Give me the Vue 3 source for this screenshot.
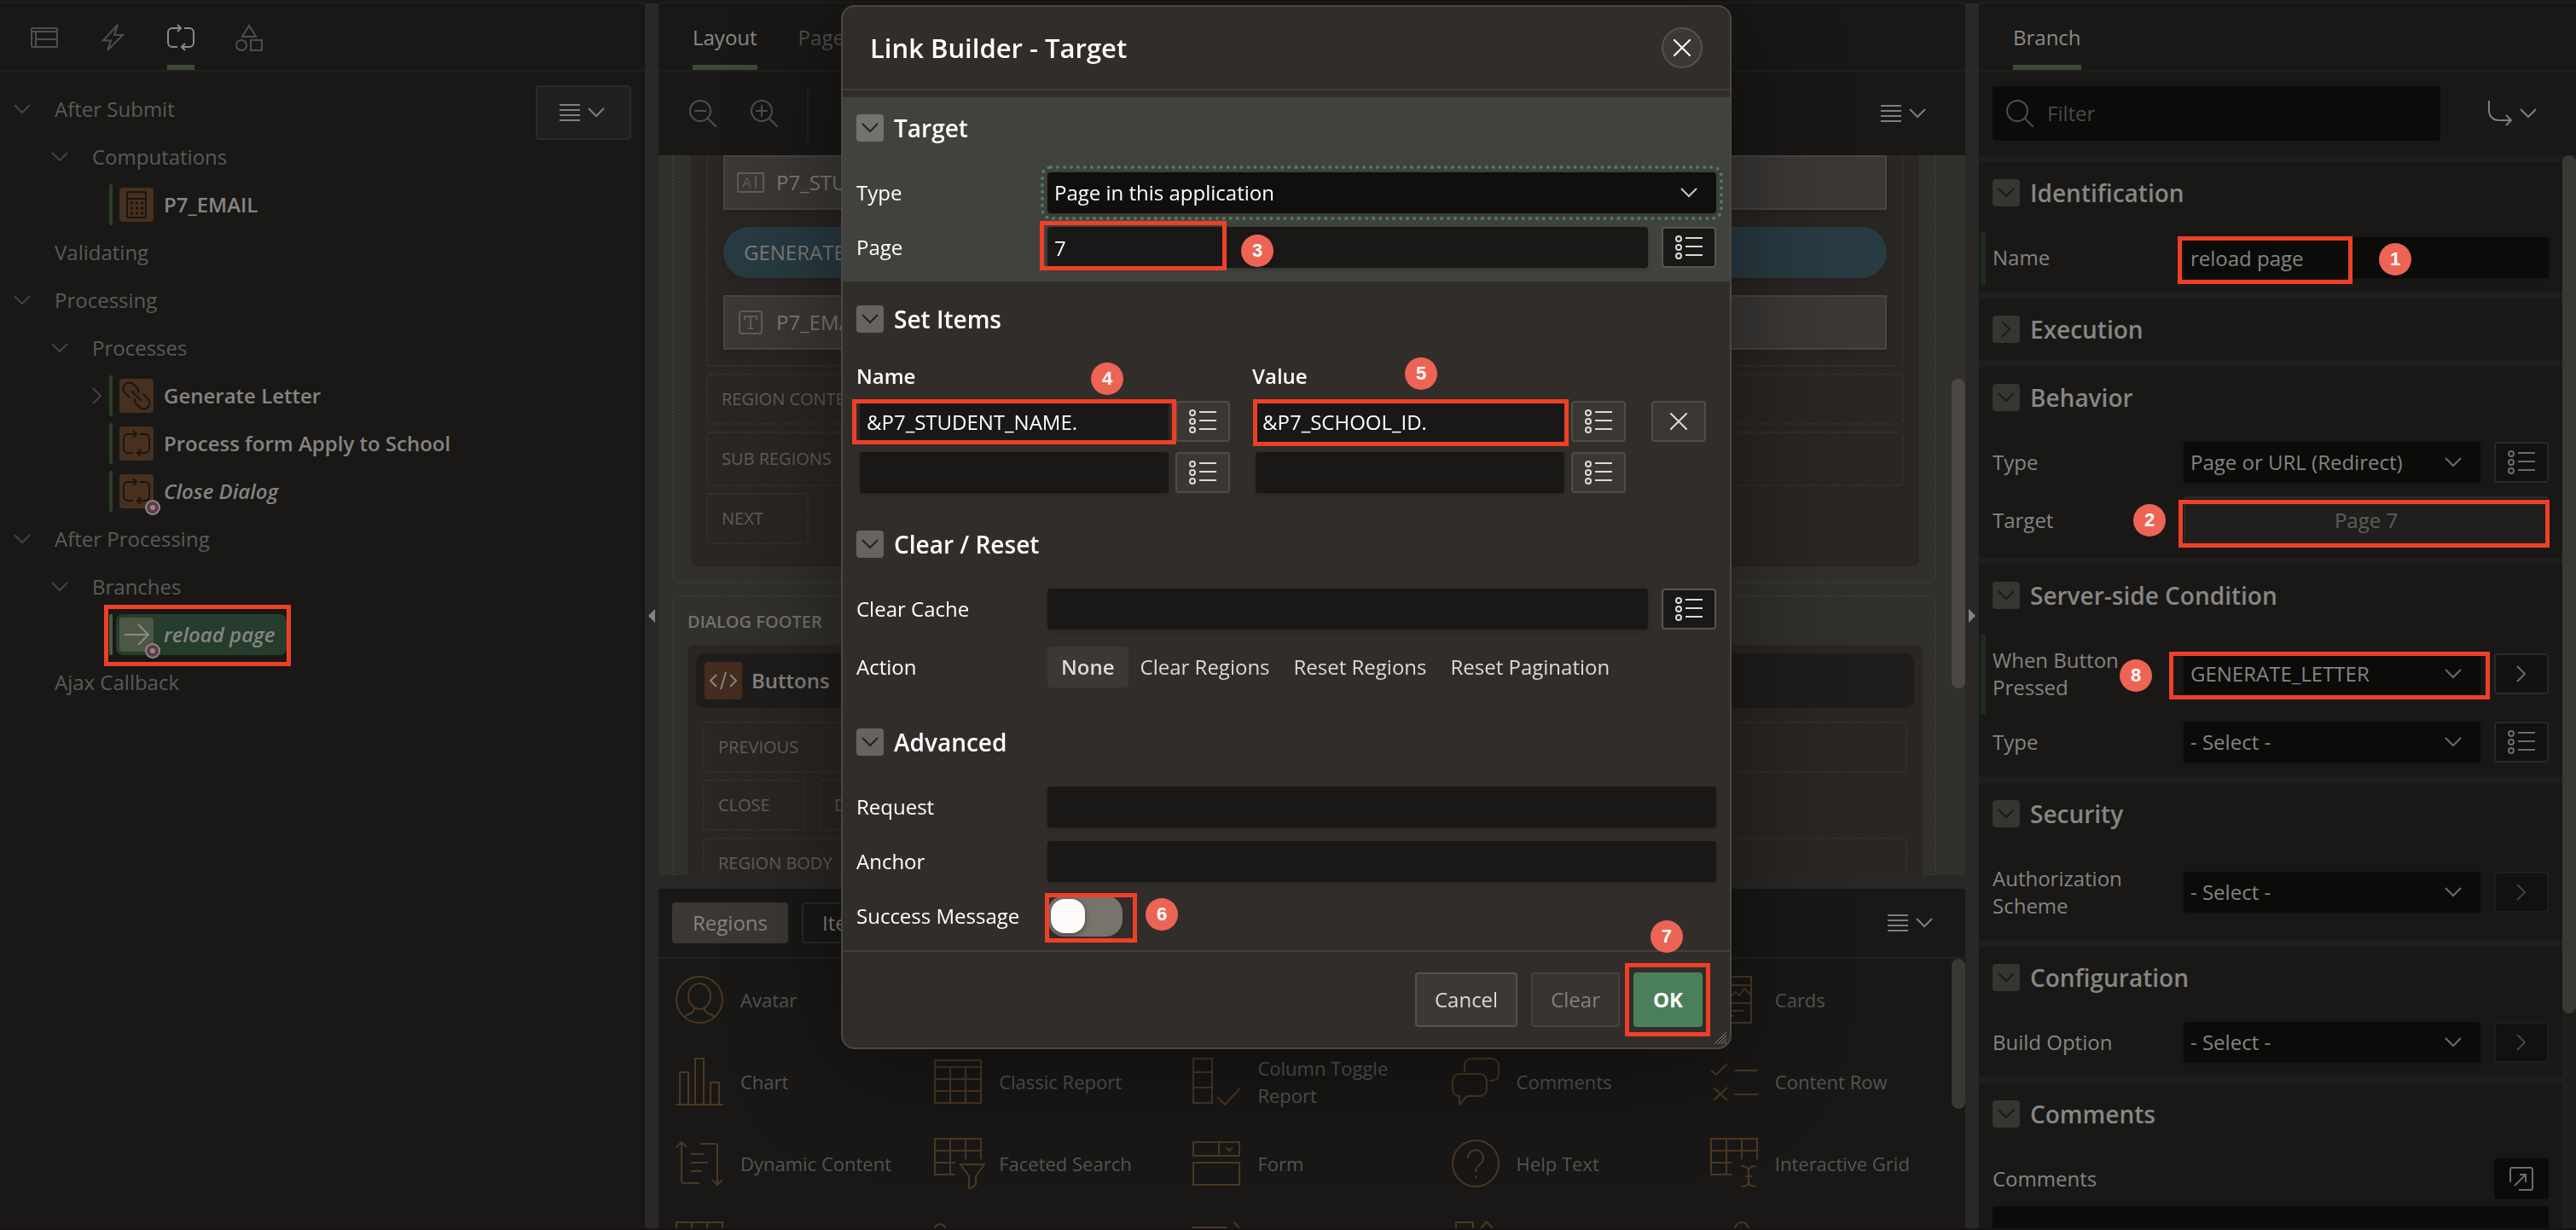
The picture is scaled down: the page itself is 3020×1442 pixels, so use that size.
<script setup>
import { ref } from 'vue'

const tree = [
  { level: 1, text: 'After Submit', toggle: 'down' },
  { level: 2, text: 'Computations', toggle: 'down' },
  { level: 3, text: 'P7_EMAIL', icon: 'calc' },
  { level: 1, text: 'Validating' },
  { level: 1, text: 'Processing', toggle: 'down' },
  { level: 2, text: 'Processes', toggle: 'down' },
  { level: 3, text: 'Generate Letter', icon: 'link', toggle: 'right' },
  { level: 3, text: 'Process form Apply to School', icon: 'process-box' },
  { level: 3, text: 'Close Dialog', icon: 'process-box', conditional: true },
  { level: 1, text: 'After Processing', toggle: 'down' },
  { level: 2, text: 'Branches', toggle: 'down' },
  { level: 3, text: 'reload page', icon: 'arrow', conditional: true, selected: true },
  { level: 1, text: 'Ajax Callback' }
]

const gallery = [
  ['avatar', 'Avatar'], null, null, null, ['cards', 'Cards'],
  ['chart', 'Chart'], ['table', 'Classic Report'], ['columns', 'Column Toggle Report'],
  ['comments', 'Comments'], ['content-row', 'Content Row'],
  ['dynamic', 'Dynamic Content'], ['faceted', 'Faceted Search'], ['form', 'Form'],
  ['help', 'Help Text'], ['igrid', 'Interactive Grid'],
  ['table-top', ''], ['list', ''], ['lines', ''], ['shapes-lg', ''], ['person', '']
]

const groups = [
  {
    title: 'Identification', open: true,
    rows: [{ id: 'name', label: 'Name', kind: 'text', value: 'reload page', changed: true, step: 1 }]
  },
  { title: 'Execution', open: false, rows: [] },
  {
    title: 'Behavior', open: true,
    rows: [
      { id: 'btype', label: 'Type', kind: 'select', value: 'Page or URL (Redirect)', aside: 'list' },
      { id: 'target', label: 'Target', kind: 'button', value: 'Page 7', step: 2 }
    ]
  },
  {
    title: 'Server-side Condition', open: true,
    rows: [
      { id: 'pressed', label: 'When Button Pressed', kind: 'select', value: 'GENERATE_LETTER', aside: 'go', changed: true, step: 8 },
      { id: 'ctype', label: 'Type', kind: 'select', value: '- Select -', aside: 'list' }
    ]
  },
  {
    title: 'Security', open: true,
    rows: [{ id: 'auth', label: 'Authorization Scheme', kind: 'select', value: '- Select -', aside: 'go', off: true }]
  },
  {
    title: 'Configuration', open: true,
    rows: [{ id: 'build', label: 'Build Option', kind: 'select', value: '- Select -', aside: 'go', off: true }]
  }
]

const actions = ['None', 'Clear Regions', 'Reset Regions', 'Reset Pagination']
const action = ref('None')
const success = ref(false)
</script>

<template>
  <svg class="sprite" aria-hidden="true">
    <symbol id="down" viewBox="0 0 20 12"><path d="M1 1l9 9 9-9" /></symbol>
    <symbol id="right" viewBox="0 0 12 20"><path d="M1 1l9 9-9 9" /></symbol>
    <symbol id="menu" viewBox="0 0 24 20"><path d="M0 1h24M0 7h24M0 13h24M0 19h24" /></symbol>
    <symbol id="close" viewBox="0 0 20 20"><path d="M0 0l20 20M20 0L0 20" /></symbol>
    <symbol id="lov" viewBox="0 0 32 32">
      <circle cx="4" cy="6" r="3" /><circle cx="4" cy="16" r="3" /><circle cx="4" cy="26" r="3" />
      <path d="M12 5h20M12 15h20M12 25h20" />
    </symbol>
    <symbol id="layout" viewBox="0 0 32 32"><path d="M2 5h28a1 1 0 0 1 1 1v20a1 1 0 0 1-1 1H2a1 1 0 0 1-1-1V6a1 1 0 0 1 1-1zM1 9h30M6 9v18M6 18h25" /></symbol>
    <symbol id="bolt" viewBox="0 0 32 32"><path d="M22 1L5 19.500h9L10 31 28 13H18z" /></symbol>
    <symbol id="process" viewBox="0 0 32 32"><path d="M12 27H6a5 5 0 0 1-5-5V10a5 5 0 0 1 5-5h10M12 1l4 4-4 4M20 5h6a5 5 0 0 1 5 5v12a5 5 0 0 1-5 5h-9M21 23l-4 4 4 4" /></symbol>
    <symbol id="process-box" viewBox="-4 -4 40 40"><path d="M12 27H6a5 5 0 0 1-5-5V10a5 5 0 0 1 5-5h10M12 1l4 4-4 4M20 5h6a5 5 0 0 1 5 5v12a5 5 0 0 1-5 5h-9M21 23l-4 4 4 4" /></symbol>
    <symbol id="shapes" viewBox="0 0 32 32"><path d="M16 2l8 13H8zM18 19h13v12H18z" /><circle cx="7" cy="25" r="6" /></symbol>
    <symbol id="zoom" viewBox="0 0 32 32"><circle cx="13" cy="13" r="12" /><path d="M22 22l10 10" /></symbol>
    <symbol id="zoom-out" viewBox="0 0 32 32"><circle cx="13" cy="13" r="12" /><path d="M22 22l10 10M6 13h14" /></symbol>
    <symbol id="zoom-in" viewBox="0 0 32 32"><circle cx="13" cy="13" r="12" /><path d="M22 22l10 10M6 13h14M13 6v14" /></symbol>
    <symbol id="calc" viewBox="0 0 40 40">
      <path d="M11 5h18a2 2 0 0 1 2 2v26a2 2 0 0 1-2 2H11a2 2 0 0 1-2-2V7a2 2 0 0 1 2-2zM9 13h22" />
      <path stroke-width="3" d="M13 18h3M19 18h3M25 18h3M13 24h3M19 24h3M25 24h3M13 30h3M19 30h3M25 30h3" />
    </symbol>
    <symbol id="link" viewBox="0 0 40 40"><path transform="rotate(45 20 20)" d="M16 27H8a7 7 0 0 1 0-14h6a6 6 0 0 1 5 3M24 13h8a7 7 0 0 1 0 14h-6a6 6 0 0 1-5-3M12 20h16" /></symbol>
    <symbol id="arrow" viewBox="0 0 40 40"><path d="M6 20h28M22 8l12 12-12 12" /></symbol>
    <symbol id="code" viewBox="0 0 44 44"><path d="M14 15l-7 7 7 7M30 15l7 7-7 7M25 12l-6 20" /></symbol>
    <symbol id="turn" viewBox="0 0 30 30"><path d="M1 0v12a11 11 0 0 0 11 11h15M21 17l6 6-6 6" /></symbol>
    <symbol id="popout" viewBox="0 0 28 28"><path d="M1 18V3a2 2 0 0 1 2-2h22a2 2 0 0 1 2 2v22a2 2 0 0 1-2 2H11M6 22L19 9M12 9h7v9" /></symbol>
    <symbol id="avatar" viewBox="0 0 56 56"><circle cx="28" cy="28" r="27" /><ellipse cx="28" cy="24" rx="13" ry="15" /><path d="M22 38c0 7-8 6-12 10M34 38c0 7 8 6 12 10" /></symbol>
    <symbol id="cards" viewBox="0 0 56 56"><path d="M9 1h39v54H9zM9 11h39M9 32h39M9 27l8-8 6 6 7-6 4 4 6-8 8 8M16 41h23M16 47h12" /></symbol>
    <symbol id="chart" viewBox="0 0 56 56"><path d="M0 55h56M5 55V17h10v38M23 55V1h10v54M41 55V29h10v26" /></symbol>
    <symbol id="table" viewBox="0 0 56 56"><path d="M1 3h54v50H1zM1 11h54M1 25h54M1 39h54M19 11v42M37 11v42" /></symbol>
    <symbol id="columns" viewBox="0 0 56 56"><path d="M1 1h22v52H1zM1 17h22M1 35h22M29 46l9 9 18-19" /></symbol>
    <symbol id="comments" viewBox="0 0 56 56"><path d="M15 17V9a8 8 0 0 1 8-8h24a8 8 0 0 1 8 8v10a8 8 0 0 1-8 8h-3M9 19h24a8 8 0 0 1 8 8v10a8 8 0 0 1-8 8H18L9 55V45a8 8 0 0 1-8-8V27a8 8 0 0 1 8-8z" /></symbol>
    <symbol id="content-row" viewBox="0 0 56 56"><path d="M1 15l6 5L20 7M28 15h28M4 35l16 15M20 35L4 50M28 43h28" /></symbol>
    <symbol id="dynamic" viewBox="0 0 56 56"><path d="M7 3v46a2 2 0 0 0 2 2h19M1 9l6-6 6 6M29 5h18a2 2 0 0 1 2 2v46M43 47l6 6 6-6M18 17h15M18 27h20M18 37h13" /></symbol>
    <symbol id="faceted" viewBox="0 0 60 60"><path d="M25 43H1V1h54v24M19 1v42M37 1v24M1 15h54M1 29h24M31 31h28l-10 14v10l-8 5V45z" /></symbol>
    <symbol id="form" viewBox="0 0 56 56"><path d="M1 3h54v16H1zM31 3v16M39 9l4 4 4-4M1 27h54v26H1z" /></symbol>
    <symbol id="help" viewBox="0 0 56 56"><circle cx="28" cy="28" r="27" /><path d="M19 22a9 9 0 1 1 15 6c-4 4-6 5-6 10M28 42v3" /></symbol>
    <symbol id="igrid" viewBox="0 0 60 60"><path d="M25 43H1V1h54v24M19 1v42M37 1v24M1 15h54M1 29h24M36 33c5 0 9 2 9 5v14c0 3-4 5-9 5M54 33c-5 0-9 2-9 5M54 57c-5 0-9-2-9-5M41 45h8" /></symbol>
    <symbol id="table-top" viewBox="0 0 56 56"><path d="M1 1h54v54H1zM19 1v54M37 1v54" /></symbol>
    <symbol id="list" viewBox="0 0 56 56"><circle cx="7" cy="9" r="6" /><path d="M20 9h36" /></symbol>
    <symbol id="lines" viewBox="0 0 56 56"><path d="M0 7h40M49 1l6 7-6 7" /></symbol>
    <symbol id="shapes-lg" viewBox="0 0 56 56"><path d="M5 1h20v20H5zM41 0l10 12-10 12-10-12z" /></symbol>
    <symbol id="person" viewBox="0 0 56 56"><circle cx="37" cy="9" r="8" /></symbol>
  </svg>

  <div class="shell">
    <section class="pane">
      <nav class="tabs icon-tabs">
        <button aria-label="Rendering"><svg class="i32"><use href="#layout" /></svg></button>
        <button aria-label="Dynamic Actions"><svg class="i32"><use href="#bolt" /></svg></button>
        <button class="active" aria-label="Processing"><svg class="i32"><use href="#process" /></svg></button>
        <button aria-label="Shared Components"><svg class="i32"><use href="#shapes" /></svg></button>
      </nav>
      <div class="tree-area">
        <ul class="tree">
          <li v-for="n in tree" :key="n.text" :class="['node', 'l' + n.level]">
            <span class="twist">
              <svg v-if="n.toggle" :class="n.toggle"><use :href="'#' + n.toggle" /></svg>
            </span>
            <template v-if="n.level === 3">
              <span class="leaf" :class="{ selected: n.selected }">
                <span class="leaf-in">
                  <span class="tile">
                    <svg class="i40"><use :href="'#' + n.icon" /></svg>
                    <i v-if="n.conditional" class="dot"></i>
                  </span>
                  <span :class="['leaf-text', { cond: n.conditional }]">{{ n.text }}</span>
                </span>
                <span v-if="n.selected" class="mark mark-node"></span>
              </span>
            </template>
            <span v-else>{{ n.text }}</span>
          </li>
        </ul>
        <button class="menu boxed" aria-label="Tree menu">
          <svg class="lines"><use href="#menu" /></svg><svg class="down"><use href="#down" /></svg>
        </button>
      </div>
    </section>

    <div class="split"><svg class="grip" viewBox="0 0 8 16"><path d="M8 0v16L0 8z" /></svg></div>

    <section class="pane">
      <nav class="tabs">
        <button class="active">Layout</button>
        <button>Page</button>
      </nav>
      <div class="toolbar">
        <button class="tool" aria-label="Zoom out"><svg class="i32"><use href="#zoom-out" /></svg></button>
        <button class="tool" aria-label="Zoom in"><svg class="i32"><use href="#zoom-in" /></svg></button>
        <span class="rule"></span>
        <button class="menu" aria-label="Layout menu">
          <svg class="lines"><use href="#menu" /></svg><svg class="down"><use href="#down" /></svg>
        </button>
      </div>

      <div class="canvas">
        <div class="canvas-in">
          <div class="zone zone-open">
            <div class="block">
              <div class="dots dots-open">
                <div class="item">
                  <svg class="i32" viewBox="0 0 32 32"><rect x="1" y="5" width="30" height="22" rx="1" /><text x="6" y="22">A</text><path d="M22 9v14" /></svg>
                  P7_STU
                </div>
                <div class="item pill">GENERATE</div>
                <div class="item">
                  <svg class="i32" viewBox="0 0 32 32"><rect x="3" y="3" width="26" height="26" rx="3" /><path d="M9 13V9h14v4M16 9v14M13 23h6" /></svg>
                  P7_EMA
                </div>
              </div>
              <div class="dots slot">REGION CONTE</div>
              <div class="dots slot tall">SUB REGIONS</div>
              <div class="dots slot small">NEXT</div>
            </div>
          </div>
          <div class="zone zone-footer">
            <h3>DIALOG FOOTER</h3>
            <div class="block block-footer">
              <div class="region"><span class="code"><svg class="i44"><use href="#code" /></svg></span>Buttons</div>
              <div class="footer-slots">
                <div class="dots slot">PREVIOUS</div>
                <div class="slot-row">
                  <div class="dots slot small">CLOSE</div>
                  <div class="dots slot small">D</div>
                </div>
                <div class="dots slot">REGION BODY</div>
              </div>
            </div>
          </div>
        </div>
        <span class="thumb thumb-canvas"></span>
      </div>

      <div class="hsplit"></div>

      <div class="gallery">
        <div class="gallery-bar">
          <button class="seg on">Regions</button>
          <button class="seg">Items</button>
          <button class="menu" aria-label="Gallery menu">
            <svg class="lines"><use href="#menu" /></svg><svg class="down"><use href="#down" /></svg>
          </button>
        </div>
        <div class="gallery-body">
          <ul class="gallery-grid">
            <li v-for="(g, i) in gallery" :key="i">
              <template v-if="g">
                <svg :class="g[0] === 'faceted' || g[0] === 'igrid' ? 'i60' : 'i56'"><use :href="'#' + g[0]" /></svg>
                <span v-if="g[1]">{{ g[1] }}</span>
              </template>
            </li>
          </ul>
          <span class="thumb thumb-gallery"></span>
        </div>
      </div>
    </section>

    <div class="split"><svg class="grip" viewBox="0 0 8 16"><path d="M0 0v16l8-8z" /></svg></div>

    <section class="pane">
      <nav class="tabs">
        <button class="active">Branch</button>
      </nav>
      <div class="toolbar props-bar">
        <label class="filter">
          <svg class="i32"><use href="#zoom" /></svg>
          <input type="search" placeholder="Filter" aria-label="Filter" />
        </label>
        <button class="menu" aria-label="Go to group">
          <svg class="i30"><use href="#turn" /></svg><svg class="down"><use href="#down" /></svg>
        </button>
      </div>
      <div class="props">
        <div class="props-list">
          <section v-for="g in groups" :key="g.title" class="group">
            <h2><button class="fold" :aria-label="g.title"><svg :class="g.open ? 'down' : 'right'"><use :href="g.open ? '#down' : '#right'" /></svg></button>{{ g.title }}</h2>
            <div v-if="g.open" class="rows">
              <div v-for="r in g.rows" :key="r.id" class="row" :class="{ changed: r.changed }">
                <label :for="r.id">{{ r.label }}</label>
                <div class="field">
                  <input v-if="r.kind === 'text'" :id="r.id" class="ctl" :value="r.value" />
                  <template v-else-if="r.kind === 'select'">
                    <select :id="r.id" class="ctl"><option>{{ r.value }}</option></select>
                    <svg class="down caret"><use href="#down" /></svg>
                  </template>
                  <button v-else :id="r.id" class="ctl target">{{ r.value }}</button>
                  <span v-if="r.step" :class="['mark', 'mark-' + r.step]"></span>
                  <span v-if="r.step" :class="['badge', 'badge-' + r.step]">{{ r.step }}</span>
                </div>
                <button v-if="r.aside" class="aside" :disabled="r.off" :aria-label="r.label + ' options'">
                  <svg v-if="r.aside === 'list'" class="i32"><use href="#lov" /></svg>
                  <svg v-else class="right"><use href="#right" /></svg>
                </button>
              </div>
            </div>
          </section>
          <section class="group">
            <h2><button class="fold" aria-label="Comments"><svg class="down"><use href="#down" /></svg></button>Comments</h2>
            <div class="rows">
              <div class="row">
                <label for="comments-box">Comments</label>
                <div class="field"></div>
                <button class="aside plain" aria-label="Open editor"><svg class="i28"><use href="#popout" /></svg></button>
              </div>
              <textarea id="comments-box"></textarea>
            </div>
          </section>
        </div>
        <span class="thumb thumb-props"></span>
      </div>
    </section>
  </div>

  <div class="overlay">
    <form class="dialog" role="dialog" aria-labelledby="dlg-title" @submit.prevent>
      <header>
        <h1 id="dlg-title">Link Builder - Target</h1>
        <button type="button" class="x" aria-label="Close"><svg class="i20"><use href="#close" /></svg></button>
      </header>

      <section class="group lit">
        <h2><button type="button" class="fold" aria-label="Target"><svg class="down"><use href="#down" /></svg></button>Target</h2>
        <div class="rows">
          <div class="row">
            <label for="d-type">Type</label>
            <div class="field">
              <select id="d-type" class="ctl focused"><option>Page in this application</option></select>
              <svg class="down caret"><use href="#down" /></svg>
            </div>
          </div>
          <div class="row">
            <label for="d-page">Page</label>
            <div class="field">
              <input id="d-page" class="ctl" value="7" />
              <span class="mark mark-3"></span>
              <span class="badge badge-3">3</span>
            </div>
            <button type="button" class="aside" aria-label="Pick page"><svg class="i32"><use href="#lov" /></svg></button>
          </div>
        </div>
      </section>

      <section class="group">
        <h2><button type="button" class="fold" aria-label="Set Items"><svg class="down"><use href="#down" /></svg></button>Set Items</h2>
        <div class="rows rows-table">
          <table>
            <thead>
              <tr>
                <th>Name</th>
                <th>Value</th>
                <th class="last"></th>
              </tr>
            </thead>
            <tbody>
              <tr>
                <td>
                  <div class="pair">
                    <div class="field">
                      <input class="ctl" aria-label="Name 1" value="&amp;P7_STUDENT_NAME." />
                      <span class="mark mark-4"></span>
                      <span class="badge badge-4">4</span>
                    </div>
                    <button type="button" class="aside soft" aria-label="Pick item 1"><svg class="i32"><use href="#lov" /></svg></button>
                  </div>
                </td>
                <td>
                  <div class="pair">
                    <div class="field">
                      <input class="ctl" aria-label="Value 1" value="&amp;P7_SCHOOL_ID." />
                      <span class="mark mark-5"></span>
                      <span class="badge badge-5">5</span>
                    </div>
                    <button type="button" class="aside soft" aria-label="Pick value 1"><svg class="i32"><use href="#lov" /></svg></button>
                  </div>
                </td>
                <td><button type="button" class="aside soft" aria-label="Remove row"><svg class="i20"><use href="#close" /></svg></button></td>
              </tr>
              <tr>
                <td>
                  <div class="pair">
                    <div class="field"><input class="ctl" aria-label="Name 2" /></div>
                    <button type="button" class="aside soft" aria-label="Pick item 2"><svg class="i32"><use href="#lov" /></svg></button>
                  </div>
                </td>
                <td>
                  <div class="pair">
                    <div class="field"><input class="ctl" aria-label="Value 2" /></div>
                    <button type="button" class="aside soft" aria-label="Pick value 2"><svg class="i32"><use href="#lov" /></svg></button>
                  </div>
                </td>
                <td></td>
              </tr>
            </tbody>
          </table>
        </div>
      </section>

      <section class="group">
        <h2><button type="button" class="fold" aria-label="Clear / Reset"><svg class="down"><use href="#down" /></svg></button>Clear / Reset</h2>
        <div class="rows">
          <div class="row">
            <label for="d-cache">Clear Cache</label>
            <div class="field"><input id="d-cache" class="ctl" /></div>
            <button type="button" class="aside" aria-label="Pick pages"><svg class="i32"><use href="#lov" /></svg></button>
          </div>
          <div class="row row-tall" role="radiogroup" aria-label="Action">
            <span class="lbl">Action</span>
            <div class="choices">
              <label v-for="a in actions" :key="a" :class="{ on: a === action }">
                <input v-model="action" type="radio" name="action" :value="a" />{{ a }}
              </label>
            </div>
          </div>
        </div>
      </section>

      <section class="group">
        <h2><button type="button" class="fold" aria-label="Advanced"><svg class="down"><use href="#down" /></svg></button>Advanced</h2>
        <div class="rows">
          <div class="row">
            <label for="d-request">Request</label>
            <div class="field"><input id="d-request" class="ctl" /></div>
          </div>
          <div class="row">
            <label for="d-anchor">Anchor</label>
            <div class="field"><input id="d-anchor" class="ctl" /></div>
          </div>
          <div class="row">
            <label for="d-success">Success Message</label>
            <div class="field">
              <input id="d-success" v-model="success" type="checkbox" role="switch" class="switch" />
              <span class="mark mark-6"></span>
              <span class="badge badge-6">6</span>
            </div>
          </div>
        </div>
      </section>

      <footer>
        <button type="button" class="btn">Cancel</button>
        <button type="button" class="btn" disabled>Clear</button>
        <span class="ok-wrap">
          <button type="submit" class="btn ok">OK</button>
          <span class="mark mark-7"></span>
          <span class="badge badge-7">7</span>
        </span>
        <svg class="resize" viewBox="0 0 14 14"><path d="M14 0L0 14M14 4L4 14M14 8l-6 6M14 12l-2 2" /></svg>
      </footer>
    </form>
  </div>
</template>

<style>
body {
  margin: 0;
  background: #191816;
  overflow: hidden;
}
</style>

<style scoped>
.sprite { position: absolute; width: 0; height: 0; }

.shell,
.overlay {
  font-family: "Open Sans", "Noto Sans", sans-serif;
  font-size: 24px;
  line-height: 32px;
}

button, input, select, textarea {
  font: inherit;
  color: inherit;
  margin: 0;
  padding: 0;
  border: 0;
  background: none;
  box-sizing: border-box;
  outline: none;
}
h1, h2, h3, ul { margin: 0; padding: 0; list-style: none; font-weight: 600; }
ul { font-weight: 400; }

svg { fill: none; stroke: currentColor; stroke-width: 2; flex: none; display: block; }
.i20 { width: 20px; height: 20px; }
.i28 { width: 28px; height: 28px; }
.i30 { width: 30px; height: 30px; }
.i32 { width: 32px; height: 32px; }
.i40 { width: 40px; height: 40px; }
.i44 { width: 44px; height: 44px; }
.i56 { width: 56px; height: 56px; }
.i60 { width: 60px; height: 60px; margin-right: -4px; }
.down { width: 20px; height: 12px; }
.right { width: 12px; height: 20px; }
.lines { width: 24px; height: 20px; }

.shell {
  display: grid;
  grid-template-columns: minmax(0, 756fr) 16px minmax(0, 1532fr) 16px minmax(0, 700fr);
  height: 100vh;
  box-sizing: border-box;
  padding-top: 2px;
  border-bottom: 2px solid #171315;
  background: #191816;
  color: #858482;
}
.pane {
  display: flex;
  flex-direction: column;
  min-width: 0;
  min-height: 0;
  border-top: 2px solid #211f1d;
}
.split {
  display: flex;
  align-items: center;
  justify-content: center;
  margin-top: 2px;
  background: #292826;
  color: #858482;
}
.grip { width: 8px; height: 16px; fill: currentColor; stroke: none; }

/* Tabs */
.tabs {
  display: flex;
  gap: 48px;
  flex: none;
  height: 80px;
  box-sizing: border-box;
  padding: 0 40px;
  border-bottom: 2px solid #211f1d;
  color: #4f4e4c;
}
.icon-tabs { padding: 0 36px; }
.tabs button {
  height: 78px;
  border-top: 8px solid transparent;
  border-bottom: 6px solid transparent;
}
.tabs .active { color: #8b8a88; border-bottom-color: #3d4a34; }

/* Tree */
.tree-area { display: flex; align-items: flex-start; padding: 16px; }
.tree { flex: 1; color: #5b5a58; }
.node { display: flex; align-items: center; height: 56px; }
.l2 { padding-left: 44px; }
.l3 { padding-left: 88px; }
.twist { width: 48px; color: #454442; }
.l3 .twist { width: 24px; }
.l3 .twist svg { margin-left: 4px; }
.leaf {
  position: relative;
  border-left: 4px solid #313c2b;
  border-radius: 2px;
  padding-left: 4px;
  color: #858482;
}
.leaf-in {
  display: flex;
  align-items: center;
  gap: 12px;
  height: 48px;
  padding: 0 14px 0 4px;
  border-radius: 8px;
}
.tile { position: relative; border-radius: 4px; background: #46301f; color: #1b1510; }
.leaf-text { font-weight: 600; white-space: nowrap; }
.leaf-text.cond { font-style: italic; }
.selected .leaf-in { background: #263c2c; }
.selected .tile { background: #4d5844; color: #8b8a88; }
.selected { border-left-color: #4d5844; }
.dot {
  position: absolute;
  right: -6px;
  bottom: -6px;
  width: 6px;
  height: 6px;
  border-radius: 50%;
  background: #8b8a88;
  border: 4px solid #663944;
  box-shadow: 0 0 0 2px #8b8a88;
}

.menu { display: flex; align-items: center; gap: 9px; color: #807f7d; }
.boxed {
  width: 112px;
  height: 64px;
  padding-left: 26px;
  border: 2px solid #2b2a27;
  border-radius: 4px;
  background: #201f1d;
}

/* Toolbars */
.toolbar {
  display: flex;
  align-items: center;
  gap: 40px;
  flex: none;
  height: 98px;
  box-sizing: border-box;
  padding: 0 46px 0 36px;
  color: #4f4e4c;
}
.toolbar .menu { margin-left: auto; }
.rule { width: 2px; height: 64px; margin-left: -6px; background: #23221f; }
.props-bar { padding: 0 46px 0 16px; gap: 56px; }
.props-bar .menu { gap: 7px; }
.filter {
  display: flex;
  align-items: center;
  gap: 16px;
  flex: 1;
  height: 64px;
  padding-left: 16px;
  border-radius: 4px;
  background: #0b0b09;
}
.filter input { flex: 1; min-width: 0; }
.filter input::placeholder { color: #4a4947; opacity: 1; }

/* Layout canvas */
.canvas {
  position: relative;
  flex: 1;
  min-height: 0;
  overflow: hidden;
  background: #32302d;
}
.canvas-in { padding: 0 34px 0 16px; }
.zone { border: 2px dotted #3f3d3a; border-radius: 10px; }
.zone-open {
  border-top: 0;
  border-top-left-radius: 0;
  border-top-right-radius: 0;
  padding: 0 18px 18px 20px;
  margin-bottom: 14px;
}
.block {
  display: flex;
  flex-direction: column;
  gap: 8px;
  padding: 0 18px 26px;
  border-radius: 0 0 8px 8px;
  background: #2a2623;
}
.dots { border: 2px dotted #373431; border-radius: 4px; }
.dots-open {
  display: flex;
  flex-direction: column;
  gap: 20px;
  padding: 0 18px 18px;
  border-top: 0;
}
.item {
  display: flex;
  align-items: center;
  gap: 14px;
  height: 64px;
  box-sizing: border-box;
  padding-left: 14px;
  border: 2px solid #484543;
  background: #3b3836;
  color: #7e7c79;
  box-shadow: 0 4px 8px rgba(0, 0, 0, .12);
}
.item svg { color: #5f5c59; }
.item text { fill: currentColor; stroke: none; font-size: 17px; }
.pill { height: 60px; padding-left: 24px; border: 0; border-radius: 30px; background: #283b42; }
.slot {
  display: flex;
  align-items: center;
  height: 60px;
  box-sizing: border-box;
  padding: 0 16px;
  font-size: 20px;
  color: #605e5b;
}
.tall { height: 64px; }
.small { width: 120px; }
.zone-footer { padding: 0 14px 0 16px; }
.zone-footer h3 { padding: 14px 0 12px; font-size: 20px; line-height: 30px; color: #73716e; }
.block-footer { padding: 10px; gap: 16px; border-radius: 8px 8px 0 0; }
.region {
  display: flex;
  align-items: center;
  gap: 11px;
  height: 64px;
  padding-left: 10px;
  border-radius: 10px;
  background: #1f1d1b;
  font-weight: 600;
}
.code { border-radius: 4px; background: #442d1e; }
.footer-slots { display: flex; flex-direction: column; gap: 8px; padding: 0 8px; }
.slot-row { display: flex; gap: 16px; }

.thumb { position: absolute; right: 0; width: 16px; border-radius: 8px; background: #3a3835; }
.thumb-canvas { top: 31%; height: 43%; background: #4b4744; }
.thumb-gallery { top: 0; height: 176px; }
.thumb-props { top: 0; height: 80%; }

.hsplit { flex: none; height: 16px; background: #292826; }

/* Component gallery */
.gallery { flex: none; display: flex; flex-direction: column; height: 398px; }
.gallery-bar {
  display: flex;
  align-items: center;
  gap: 16px;
  flex: none;
  height: 82px;
  box-sizing: border-box;
  padding: 0 38px 0 16px;
  border-bottom: 2px solid #23221f;
}
.seg {
  height: 48px;
  padding: 0 22px;
  border: 2px solid #2b2a27;
  border-radius: 4px;
}
.seg.on { background: #3a3734; border-color: #3a3734; }
.gallery-bar .menu { margin-left: auto; }
.gallery-body { position: relative; flex: 1; min-height: 0; padding-right: 16px; overflow: hidden; }
.gallery-grid {
  display: grid;
  grid-template-columns: repeat(5, minmax(0, 1fr));
  grid-auto-rows: 96px;
  font-size: 22px;
  color: #555452;
}
.gallery-grid li { display: flex; align-items: center; gap: 20px; padding: 0 20px; }
.gallery-grid svg { color: #4c3822; }

/* Property groups, shared by the editor and the dialog */
.props { position: relative; flex: 1; min-height: 0; padding-right: 16px; overflow: hidden; background: #1f1e1c; }
.group { margin-top: 8px; }
.props .group { background: #191816; }
.group h2 {
  display: flex;
  align-items: center;
  gap: 12px;
  height: 72px;
  padding-left: 16px;
  font-size: 28px;
  color: #878684;
}
.fold {
  display: grid;
  place-items: center;
  width: 32px;
  height: 32px;
  border-radius: 4px;
  background: #363531;
  color: #1b1a18;
}
.rows { padding: 8px 0; }
.row {
  position: relative;
  display: flex;
  align-items: center;
  padding: 0 16px;
}
.changed::before {
  content: "";
  position: absolute;
  left: 2px;
  top: 2px;
  bottom: 0;
  width: 6px;
  background: #1e2b20;
}
.row > label, .lbl { width: 224px; flex: none; padding: 16px 24px 16px 0; box-sizing: border-box; }
.dialog .row > label { padding-right: 0; }
.field { position: relative; flex: 1; min-width: 0; }
.ctl {
  display: block;
  width: 100%;
  height: 48px;
  padding: 0 8px;
  border-radius: 4px;
  background: #0b0b09;
  appearance: none;
  box-shadow: 0 2px 4px rgba(0, 0, 0, .2);
}
.caret { position: absolute; right: 22px; top: 18px; color: #6d6c6a; }
.dialog .caret { color: #c9c7c4; }
.target {
  height: 56px;
  margin: 8px 0;
  border: 2px solid #2a2926;
  background: #201f1d;
  color: #5f5e5c;
}
.aside {
  display: grid;
  place-items: center;
  flex: none;
  width: 64px;
  height: 48px;
  margin-left: 16px;
  border: 2px solid #2a2927;
  border-radius: 4px;
  background: #11110f;
  color: #6d6c6a;
}
.aside:disabled { border-color: #211f1d; color: #454442; }
.plain { border-color: #0b0b09; background: #0b0b09; }
textarea {
  display: block;
  width: calc(100% - 32px);
  height: 160px;
  margin: 0 16px;
  border-radius: 4px;
  background: #0b0b09;
  resize: none;
}

/* Dialog */
.overlay {
  position: fixed;
  inset: 0;
  display: flex;
  justify-content: center;
  align-items: flex-start;
  padding: 6px 4px 0 0;
  pointer-events: none;
}
.dialog {
  position: relative;
  width: 1044px;
  max-width: 100%;
  box-sizing: border-box;
  border: 2px solid #4b4743;
  border-radius: 16px;
  background: #312d2a;
  color: #fff;
  box-shadow: 0 16px 128px rgba(0, 0, 0, .45);
  pointer-events: auto;
}
.dialog header {
  display: flex;
  align-items: center;
  justify-content: space-between;
  height: 96px;
  padding: 0 32px;
  border-bottom: 2px solid #423e3b;
}
h1 { font-size: 31px; }
.x {
  display: grid;
  place-items: center;
  width: 48px;
  height: 48px;
  border: 2px solid #55514d;
  border-radius: 50%;
  background: #3c3935;
}
.lit { background: #41423d; }
.dialog .group h2 { color: #fff; }
.dialog .fold { background: #67635e; color: #24211f; }
.dialog .lit .fold { background: #73736d; }
.dialog .ctl { background: #191816; }
.dialog .focused {
  background: #100f0d;
  outline: 4px dotted #4b8061;
  outline-offset: 4px;
}
.dialog .aside { border-color: #5a5550; background: #191816; color: #dcdad7; }
.dialog .soft { border-color: #504c48; background: #3b3834; }
.rows-table { padding: 8px 16px 10px; }
table { width: 100%; border-collapse: collapse; table-layout: fixed; }
th { height: 46px; padding: 0; text-align: left; font-weight: 600; }
.last { width: 80px; }
td { height: 60px; padding: 0 0 0 4px; }
.pair { display: flex; padding-right: 26px; }
.pair .aside { margin-left: 8px; }
td > .aside { margin-left: 0; }
.row-tall { height: 72px; }
.choices { display: flex; }
.choices label {
  display: flex;
  align-items: center;
  height: 48px;
  padding: 0 14px;
  border-radius: 4px;
  color: #dcdad7;
}
.choices .on { padding: 0 16px; background: #3c3935; font-weight: 600; }
.choices input { position: absolute; opacity: 0; width: 1px; height: 1px; }
.switch {
  display: block;
  width: 88px;
  height: 48px;
  padding: 4px;
  border-radius: 20px;
  background: #79736e;
  appearance: none;
}
.switch::before {
  content: "";
  display: block;
  width: 40px;
  height: 40px;
  border-radius: 16px;
  background: #fdfcfa;
  box-shadow: 0 2px 6px rgba(0, 0, 0, .4);
}
.switch:checked::before { margin-left: 40px; }
.dialog footer {
  position: relative;
  display: flex;
  justify-content: flex-end;
  gap: 16px;
  padding: 24px 32px;
  border-top: 2px solid #423e3b;
}
.btn {
  height: 64px;
  padding: 0 21px;
  border: 2px solid #56524e;
  border-radius: 4px;
  background: #3c3935;
  color: #dcdad7;
}
.btn:disabled { border-color: #45413d; background: #37342f; color: #85817d; }
.btn.ok { border-color: #4b7f5a; background: #4b7f5a; color: #fff; font-weight: 700; }
.ok-wrap { position: relative; }
.resize { position: absolute; right: 4px; bottom: 4px; width: 14px; height: 14px; stroke-width: 1; color: #8b8784; }

/* Walkthrough annotations */
.mark { position: absolute; box-sizing: border-box; border: 5px solid #ee4027; pointer-events: none; z-index: 2; }
.badge {
  position: absolute;
  z-index: 3;
  width: 38px;
  height: 38px;
  border-radius: 50%;
  background: #ed6454;
  color: #fff;
  font: 700 22px/38px "Liberation Sans", Arial, sans-serif;
  text-align: center;
}
.mark-node { inset: -11px -5px -13px -10px; }
.mark-1 { left: -7px; top: -1px; width: 205px; height: 56px; }
.badge-1 { left: 229px; top: 7px; }
.mark-2 { inset: 12px -1px 4px -6px; }
.badge-2 { left: -59px; top: 17px; }
.mark-8 { inset: -2px -11px -6px -17px; }
.badge-8 { left: -75px; top: 7px; }
.mark-3 { left: -9px; top: -7px; width: 219px; height: 58px; }
.badge-3 { left: 227px; top: 9px; }
.mark-4 { inset: -2px -9px -3px -9px; }
.badge-4 { left: 271px; top: -45px; }
.mark-5 { inset: -2px -5px -5px -3px; }
.badge-5 { left: 175px; top: -51px; }
.mark-6 { left: -3px; top: -3px; width: 108px; height: 58px; }
.badge-6 { left: 115px; top: 3px; }
.mark-7 { inset: -11px -9px -11px -10px; }
.badge-7 { left: 20px; top: -61px; }
</style>
